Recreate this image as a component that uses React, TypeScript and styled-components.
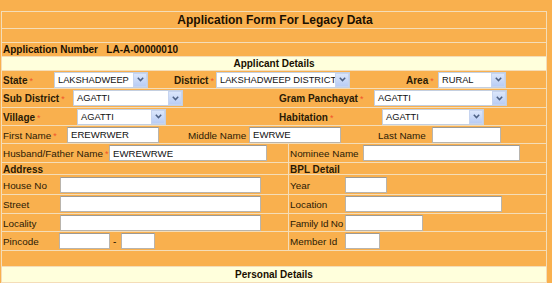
import React from "react";
import styled, { createGlobalStyle } from "styled-components";

const ORANGE = "#F9B04E";
const LINE = "#F4DDB8";
const YELLOW = "#FFFFDC";
const TEXT = "#2a1a05";

const Global = createGlobalStyle`
  html, body { margin: 0; padding: 0; background: ${ORANGE}; }
  body { font-family: "Liberation Sans", Arial, sans-serif; color: ${TEXT}; }
`;

const Page = styled.div`
  padding: 11px 0 0 1px;
  width: 552px;
  height: 283px;
  box-sizing: border-box;
  overflow: hidden;
`;

const Table = styled.div`
  width: 546px;
  box-sizing: border-box;
  border: 1px solid ${LINE};
  border-bottom: none;
`;

const Row = styled.div<{ $h: number; $bg?: string; $center?: boolean }>`
  display: flex;
  align-items: center;
  justify-content: ${(p) => (p.$center ? "center" : "flex-start")};
  height: ${(p) => p.$h}px;
  box-sizing: border-box;
  border-bottom: 1px solid ${LINE};
  background: ${(p) => p.$bg || "transparent"};
`;

const Title = styled.div`
  font-size: 12px;
  font-weight: bold;
  color: #1a0f00;
  padding-left: 2px;
`;

const Heading = styled.div`
  font-size: 10px;
  font-weight: bold;
  color: #1a0f00;
`;

const Half = styled.div<{ $w?: number; $split?: boolean }>`
  display: flex;
  align-items: center;
  height: 100%;
  box-sizing: border-box;
  ${(p) => (p.$w ? `width: ${p.$w}px;` : "flex: 1;")}
  ${(p) => (p.$split ? `border-left: 1px solid ${LINE};` : "")}
`;

const Cell = styled.div<{ $w?: number; $pl?: number }>`
  display: flex;
  align-items: center;
  height: 100%;
  box-sizing: border-box;
  ${(p) => (p.$w ? `width: ${p.$w}px; flex: none;` : "flex: 1;")}
  padding-left: ${(p) => p.$pl ?? 0}px;
  white-space: nowrap;
`;

const Label = styled.span<{ $bold?: boolean; $tight?: boolean }>`
  font-size: ${(p) => (p.$bold ? "10px" : "9.9px")};
  font-weight: ${(p) => (p.$bold ? "bold" : "normal")};
  letter-spacing: ${(p) => (p.$tight ? "-0.2px" : "0")};
  color: ${TEXT};
  padding-top: 1px;
`;

const Star = styled.span`
  color: #f2542a;
  font-size: 9px;
  margin-left: 2px;
  font-weight: normal;
`;

const Input = styled.div<{ $w: number }>`
  width: ${(p) => p.$w}px;
  height: 16px;
  box-sizing: border-box;
  background: #fff;
  border: 1px solid #b9b4ac;
  border-top-color: #9e9a93;
  font-size: 9.6px;
  color: #111;
  display: flex;
  align-items: center;
  padding-left: 3px;
`;

const SelectBox = styled.div<{ $w: number }>`
  width: ${(p) => p.$w}px;
  height: 16px;
  box-sizing: border-box;
  background: #fff;
  border: 1px solid #c4cfe0;
  display: flex;
  align-items: center;
  font-size: 9.3px;
  color: #111;
`;

const SelectText = styled.span`
  flex: 1;
  padding-left: 3px;
  overflow: hidden;
`;

const Arrow = styled.div`
  width: 14px;
  height: 14px;
  background: linear-gradient(#dbe6fb, #b9cdf5);
  border: 1px solid #c6d4f0;
  box-sizing: border-box;
  display: flex;
  align-items: center;
  justify-content: center;
`;

const Dash = styled.span`
  font-size: 10px;
  margin: 0 5px 0 3px;
`;

const Select = ({ w, value }: { w: number; value: string }) => (
  <SelectBox $w={w}>
    <SelectText>{value}</SelectText>
    <Arrow>
      <svg width="7" height="5" viewBox="0 0 7 5">
        <path d="M0.8 0.8 L3.5 3.6 L6.2 0.8" fill="none" stroke="#4d6185" strokeWidth="1.5" />
      </svg>
    </Arrow>
  </SelectBox>
);

const Req = ({ children, bold }: { children: React.ReactNode; bold?: boolean }) => (
  <Label $bold={bold}>
    {children}
    <Star>*</Star>
  </Label>
);

export default function App() {
  return (
    <>
      <Global />
      <Page>
        <Table>
          <Row $h={17} $center>
            <Title>Application Form For Legacy Data</Title>
          </Row>
          <Row $h={14} />
          <Row $h={14}>
            <Cell $pl={1}>
              <Heading>Application Number&nbsp;&nbsp;&nbsp;LA-A-00000010</Heading>
            </Cell>
          </Row>
          <Row $h={14} $bg={YELLOW} $center>
            <Heading>Applicant Details</Heading>
          </Row>

          <Row $h={18}>
            <Cell $w={52} $pl={1}><Req bold>State</Req></Cell>
            <Cell $w={118}><Select w={94} value="LAKSHADWEEP" /></Cell>
            <Cell $w={44} $pl={2}><Req bold>District</Req></Cell>
            <Cell $w={188}><Select w={134} value="LAKSHADWEEP DISTRICT" /></Cell>
            <Cell $w={32} $pl={2}><Req bold>Area</Req></Cell>
            <Cell $pl={2}><Select w={68} value="RURAL" /></Cell>
          </Row>

          <Row $h={19}>
            <Cell $w={71} $pl={1}><Req bold>Sub District</Req></Cell>
            <Cell $w={204}><Select w={110} value="AGATTI" /></Cell>
            <Cell $w={97} $pl={2}><Req bold>Gram Panchayat</Req></Cell>
            <Cell><Select w={133} value="AGATTI" /></Cell>
          </Row>

          <Row $h={18}>
            <Cell $w={75} $pl={1}><Req bold>Village</Req></Cell>
            <Cell $w={200}><Select w={89} value="AGATTI" /></Cell>
            <Cell $w={105} $pl={2}><Req bold>Habitation</Req></Cell>
            <Cell><Select w={102} value="AGATTI" /></Cell>
          </Row>

          <Row $h={18}>
            <Cell $w={64} $pl={1}><Req>First Name</Req></Cell>
            <Cell $w={120} $pl={1}><Input $w={92}>EREWRWER</Input></Cell>
            <Cell $w={62} $pl={2}><Label>Middle Name</Label></Cell>
            <Cell $w={128} $pl={1}><Input $w={92}>EWRWE</Input></Cell>
            <Cell $w={55} $pl={2}><Label>Last Name</Label></Cell>
            <Cell $pl={1}><Input $w={69} /></Cell>
          </Row>

          <Row $h={19}>
            <Half $w={286}>
              <Cell $w={106} $pl={1}><Req>Husband/Father Name</Req></Cell>
              <Cell $pl={1}><Input $w={158}>EWREWRWE</Input></Cell>
            </Half>
            <Half $split>
              <Cell $w={74} $pl={1}><Label>Nominee Name</Label></Cell>
              <Cell><Input $w={157} /></Cell>
            </Half>
          </Row>

          <Row $h={12}>
            <Half $w={286}>
              <Cell $pl={1}><Label $bold>Address</Label></Cell>
            </Half>
            <Half $split>
              <Cell $pl={1}><Label $bold>BPL Detail</Label></Cell>
            </Half>
          </Row>

          <Row $h={20}>
            <Half $w={286}>
              <Cell $w={58} $pl={1}><Label>House No</Label></Cell>
              <Cell><Input $w={201} /></Cell>
            </Half>
            <Half $split>
              <Cell $w={56} $pl={1}><Label>Year</Label></Cell>
              <Cell><Input $w={42} /></Cell>
            </Half>
          </Row>

          <Row $h={19}>
            <Half $w={286}>
              <Cell $w={58} $pl={1}><Label>Street</Label></Cell>
              <Cell><Input $w={201} /></Cell>
            </Half>
            <Half $split>
              <Cell $w={56} $pl={1}><Label>Location</Label></Cell>
              <Cell><Input $w={157} /></Cell>
            </Half>
          </Row>

          <Row $h={18}>
            <Half $w={286}>
              <Cell $w={58} $pl={1}><Label>Locality</Label></Cell>
              <Cell><Input $w={201} /></Cell>
            </Half>
            <Half $split>
              <Cell $w={56} $pl={1}><Label $tight>Family Id No</Label></Cell>
              <Cell><Input $w={78} /></Cell>
            </Half>
          </Row>

          <Row $h={19}>
            <Half $w={286}>
              <Cell $w={57} $pl={1}><Label>Pincode</Label></Cell>
              <Cell>
                <Input $w={51} />
                <Dash>-</Dash>
                <Input $w={34} />
              </Cell>
            </Half>
            <Half $split>
              <Cell $w={56} $pl={1}><Label>Member Id</Label></Cell>
              <Cell><Input $w={35} /></Cell>
            </Half>
          </Row>

          <Row $h={16} />
          <Row $h={16} $bg={YELLOW} $center>
            <Heading>Personal Details</Heading>
          </Row>
        </Table>
      </Page>
    </>
  );
}
